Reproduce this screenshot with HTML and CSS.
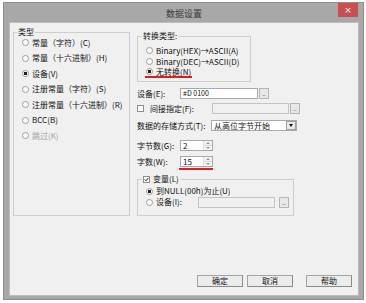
FILE: index.html
```html
<!DOCTYPE html>
<html lang="zh">
<head>
<meta charset="utf-8">
<title>数据设置</title>
<link rel="stylesheet" href="styles.css">
</head>
<body>
<div class="window">
  <div class="titlebar">
    <span class="title">数据设置</span>
    <span class="close">×</span>
  </div>
  <div class="client">
    <div class="main">
      <fieldset class="group type-group">
        <legend>类型</legend>
        <div class="opt first"><span class="radio"></span><span>常量（字符）(C)</span></div>
        <div class="opt"><span class="radio"></span><span>常量（十六进制）(H)</span></div>
        <div class="opt"><span class="radio on"></span><span>设备(V)</span></div>
        <div class="opt"><span class="radio"></span><span>注册常量（字符）(S)</span></div>
        <div class="opt"><span class="radio"></span><span>注册常量（十六进制）(R)</span></div>
        <div class="opt"><span class="radio"></span><span>BCC(B)</span></div>
        <div class="opt disabled"><span class="radio"></span><span>跳过(K)</span></div>
      </fieldset>
      <div class="right">
        <fieldset class="group conv-group">
          <legend>转换类型:</legend>
          <div class="copt"><span class="radio"></span><span>Binary(HEX)→ASCII(A)</span></div>
          <div class="copt"><span class="radio"></span><span>Binary(DEC)→ASCII(D)</span></div>
          <div class="copt marked"><span class="radio on"></span><span>无转换(N)</span></div>
        </fieldset>
        <div class="frow r-device">
          <span class="lbl w43">设备(E):</span>
          <span class="input dev-input">#D 0100</span>
          <span class="dots">..</span>
        </div>
        <div class="frow r-indirect">
          <span class="check"></span>
          <span class="lbl w62">间接指定(F):</span>
          <span class="input disabled ind-input"></span>
          <span class="dots">..</span>
        </div>
        <div class="frow r-store">
          <span class="lbl w74">数据的存储方式(T):</span>
          <span class="select"><span class="sel-text">从高位字节开始</span><span class="sel-btn"><span class="tri"></span></span></span>
        </div>
        <div class="frow r-bytes">
          <span class="lbl w43">字节数(G):</span>
          <span class="spin"><span class="spin-val">2</span><span class="spin-btns"><span class="sb up"></span><span class="sb down"></span></span></span>
        </div>
        <div class="frow r-words">
          <span class="lbl w43">字数(W):</span>
          <span class="spin-mark"><span class="spin"><span class="spin-val">15</span><span class="spin-btns"><span class="sb up"></span><span class="sb down"></span></span></span></span>
        </div>
        <fieldset class="group var-group">
          <legend><span class="check on"></span><span>变量(L)</span></legend>
          <div class="copt"><span class="radio on"></span><span>到NULL(00h)为止(U)</span></div>
          <div class="copt vrow"><span class="radio"></span><span class="lbl w40">设备(I):</span><span class="input disabled var-input"></span><span class="dots">..</span></div>
        </fieldset>
      </div>
    </div>
    <div class="buttons">
      <span class="btn b-ok">确定</span>
      <span class="btn b-cancel">取消</span>
      <span class="btn b-help">帮助</span>
    </div>
  </div>
</div>
</body>
</html>
```

FILE: styles.css
```css
* { box-sizing: border-box; }
html, body { margin: 0; padding: 0; background: #fff; }
body {
  font-family: "Noto Sans CJK SC", "Noto Sans", sans-serif;
  font-size: 8px;
  line-height: 10px;
  color: #111;
}

.window {
  margin: 2px 0 0 3px;
  width: 361px;
  height: 298px;
  border: 1px solid #8e8e8e;
  background: #a8a8a8;
  padding: 0 4px 3px 5px;
  display: flex;
  flex-direction: column;
}

.titlebar {
  height: 19px;
  display: grid;
  grid-template-columns: 1fr auto 1fr;
  align-items: start;
}
.title {
  grid-column: 2;
  padding-top: 6px;
  font-size: 9px;
  line-height: 10px;
  color: #3a3a3a;
}
.close {
  grid-column: 3;
  justify-self: end;
  width: 20px;
  height: 14px;
  margin-right: 1px;
  background: #c94f4f;
  color: #fff;
  font-family: "DejaVu Sans", sans-serif;
  font-size: 9px;
  line-height: 14px;
  text-align: center;
}

.client {
  flex: 1;
  background: #f0f0f0;
  border: 1px solid #bdbdbd;
  display: flex;
  flex-direction: column;
}

.main {
  display: flex;
  padding: 5px 0 0 3px;
}

.group {
  margin: 0;
  padding: 0;
  border: 1px solid #cdcdcd;
  min-width: 0;
}
.group legend {
  padding: 0 1px;
  line-height: 8px;
  font-size: 8px;
}

.type-group { width: 117px; }
.type-group legend { margin-left: 3px; }

.opt {
  display: flex;
  align-items: center;
  height: 15.5px;
  padding-left: 8px;
  gap: 3px;
  white-space: nowrap;
}
.opt.first { margin-top: -1px; }
.disabled { color: #a3a3a3; }

.radio {
  width: 7px;
  height: 7px;
  flex: none;
  border-radius: 50%;
  border: 1px solid #9a9a9a;
  background: #fff;
}
.radio.on {
  background: radial-gradient(circle, #222 0 1.6px, #fff 2px);
}

.check {
  width: 7px;
  height: 7px;
  flex: none;
  border: 1px solid #8e8e8e;
  background: #fff;
}
.check.on {
  background: #fff url("data:image/svg+xml;utf8,<svg xmlns='http://www.w3.org/2000/svg' viewBox='0 0 5 5'><path d='M0.6 2.4 L2 3.8 L4.4 0.8' fill='none' stroke='%23222' stroke-width='1'/></svg>") center/5px 5px no-repeat;
}

.right {
  margin-left: 7px;
  margin-top: 4px;
  width: 165px;
  display: flex;
  flex-direction: column;
}

.conv-group {
  width: 114px;
  padding: 5px 0 5px 0;
}
.conv-group legend { margin-left: 4px; }

.copt {
  display: flex;
  align-items: center;
  height: 11px;
  padding-left: 8px;
  gap: 3px;
  white-space: nowrap;
}
.copt.marked {
  width: fit-content;
  margin-left: 7px;
  padding-left: 1px;
  padding-right: 1px;
  border-bottom: 2px solid #e01e1e;
  margin-bottom: -2px;
}

.frow {
  display: flex;
  align-items: center;
  height: 11px;
  white-space: nowrap;
}
.lbl { flex: none; }
.w43 { width: 43px; }
.w62 { width: 62px; }
.w74 { width: 74px; }
.w40 { width: 39px; }

.r-device { margin-top: 6px; }
.r-indirect { margin-top: 4px; }
.r-indirect .check { margin-right: 6px; }
.r-store { margin-top: 6px; }
.r-bytes { margin-top: 9px; }
.r-words { margin-top: 5px; }

.input {
  height: 11px;
  border: 1px solid #a9a9a9;
  background: #fff;
  padding-left: 2px;
  line-height: 9px;
  font-size: 7px;
}
.input.disabled { background: #f0f0f0; border-color: #c4c4c4; }
.dev-input { width: 78px; }
.ind-input { width: 77px; }
.var-input { width: 77px; }

.dots {
  width: 10px;
  height: 11px;
  margin-left: 1px;
  border: 1px solid #b5b5b5;
  background: #e8e8e8;
  font-size: 6px;
  line-height: 10px;
  text-align: center;
  color: #333;
}

.select {
  display: flex;
  width: 86px;
  height: 11px;
  border: 1px solid #a9a9a9;
  background: #fff;
}
.sel-text { flex: 1; padding-left: 2px; line-height: 9px; }
.sel-btn {
  width: 10px;
  border: 1px solid #a0a0a0;
  background: #e9e9e9;
  display: flex;
  align-items: center;
  justify-content: center;
}
.tri {
  width: 0; height: 0;
  border-left: 2.5px solid transparent;
  border-right: 2.5px solid transparent;
  border-top: 3px solid #111;
}

.spin {
  display: flex;
  width: 33px;
  height: 11px;
  border: 1px solid #a9a9a9;
  background: #fff;
}
.spin-val { flex: 1; padding-left: 2px; line-height: 9px; }
.spin-btns {
  width: 9px;
  display: flex;
  flex-direction: column;
  border-left: 1px solid #dcdcdc;
}
.sb {
  flex: 1;
  background: #f2f2f2;
  display: flex;
  align-items: center;
  justify-content: center;
}
.sb.up { border-bottom: 1px solid #dcdcdc; }
.sb::after {
  content: "";
  width: 0; height: 0;
  border-left: 2px solid transparent;
  border-right: 2px solid transparent;
}
.sb.up::after { border-bottom: 2px solid #9a9a9a; }
.sb.down::after { border-top: 2px solid #9a9a9a; }

.spin-mark {
  display: flex;
  margin-left: -1px;
  padding: 0 0 1px 1px;
  border-bottom: 2px solid #e01e1e;
  margin-bottom: -3px;
}

.var-group {
  margin-top: 8px;
  width: 157px;
  padding: 2.5px 0 7px 0;
}
.var-group legend {
  margin-left: 4px;
  display: flex;
  align-items: center;
  gap: 3px;
}

.buttons {
  margin-top: auto;
  margin-bottom: 8px;
  display: flex;
  justify-content: flex-end;
  padding-right: 6px;
}
.btn {
  width: 46px;
  height: 12px;
  border: 1px solid #a3a3a3;
  border-right-color: #8a8a8a;
  border-bottom-color: #8a8a8a;
  background: #ececec;
  text-align: center;
  line-height: 10px;
}
.b-ok { margin-right: 4px; }
.b-cancel { margin-right: 13px; }
```
